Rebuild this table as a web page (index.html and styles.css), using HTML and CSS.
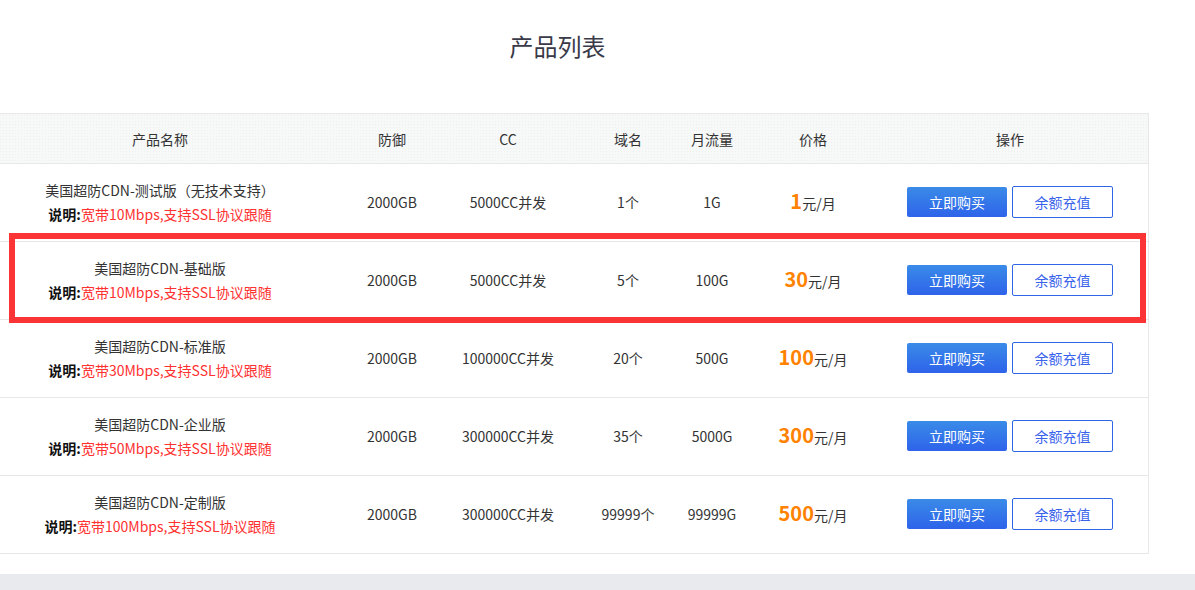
FILE: index.html
```html
<!DOCTYPE html>
<html lang="zh-CN">
<head>
<meta charset="utf-8">
<title>产品列表</title>
<link rel="stylesheet" href="styles.css">
</head>
<body>
<div class="page">
  <div class="wrap">
    <h2 class="title">产品列表</h2>
    <div class="table">
      <div class="row head">
        <div class="cell">产品名称</div>
        <div class="cell">防御</div>
        <div class="cell">CC</div>
        <div class="cell">域名</div>
        <div class="cell">月流量</div>
        <div class="cell">价格</div>
        <div class="cell">操作</div>
      </div>

      <div class="row">
        <div class="cell name">
          <div class="pname">美国超防CDN-测试版（无技术支持）</div>
          <div class="desc"><b>说明:</b><span>宽带10Mbps,支持SSL协议跟随</span></div>
        </div>
        <div class="cell">2000GB</div>
        <div class="cell">5000CC并发</div>
        <div class="cell">1个</div>
        <div class="cell">1G</div>
        <div class="cell price"><strong>1</strong>元/月</div>
        <div class="cell ops"><button class="btn buy">立即购买</button><button class="btn charge">余额充值</button></div>
      </div>

      <div class="row highlight">
        <div class="cell name">
          <div class="pname">美国超防CDN-基础版</div>
          <div class="desc"><b>说明:</b><span>宽带10Mbps,支持SSL协议跟随</span></div>
        </div>
        <div class="cell">2000GB</div>
        <div class="cell">5000CC并发</div>
        <div class="cell">5个</div>
        <div class="cell">100G</div>
        <div class="cell price"><strong>30</strong>元/月</div>
        <div class="cell ops"><button class="btn buy">立即购买</button><button class="btn charge">余额充值</button></div>
      </div>

      <div class="row">
        <div class="cell name">
          <div class="pname">美国超防CDN-标准版</div>
          <div class="desc"><b>说明:</b><span>宽带30Mbps,支持SSL协议跟随</span></div>
        </div>
        <div class="cell">2000GB</div>
        <div class="cell">100000CC并发</div>
        <div class="cell">20个</div>
        <div class="cell">500G</div>
        <div class="cell price"><strong>100</strong>元/月</div>
        <div class="cell ops"><button class="btn buy">立即购买</button><button class="btn charge">余额充值</button></div>
      </div>

      <div class="row">
        <div class="cell name">
          <div class="pname">美国超防CDN-企业版</div>
          <div class="desc"><b>说明:</b><span>宽带50Mbps,支持SSL协议跟随</span></div>
        </div>
        <div class="cell">2000GB</div>
        <div class="cell">300000CC并发</div>
        <div class="cell">35个</div>
        <div class="cell">5000G</div>
        <div class="cell price"><strong>300</strong>元/月</div>
        <div class="cell ops"><button class="btn buy">立即购买</button><button class="btn charge">余额充值</button></div>
      </div>

      <div class="row">
        <div class="cell name">
          <div class="pname">美国超防CDN-定制版</div>
          <div class="desc"><b>说明:</b><span>宽带100Mbps,支持SSL协议跟随</span></div>
        </div>
        <div class="cell">2000GB</div>
        <div class="cell">300000CC并发</div>
        <div class="cell">99999个</div>
        <div class="cell">99999G</div>
        <div class="cell price"><strong>500</strong>元/月</div>
        <div class="cell ops"><button class="btn buy">立即购买</button><button class="btn charge">余额充值</button></div>
      </div>
    </div>
  </div>
  <div class="band"></div>
</div>
</body>
</html>
```

FILE: styles.css
```css
* { box-sizing: border-box; }
html, body { margin: 0; padding: 0; background: #fff; }
body {
  font-family: "Noto Sans CJK SC", "Noto Sans", sans-serif;
  color: #333;
  font-size: 14px;
  overflow: hidden;
}
.page { width: 1195px; height: 590px; overflow: hidden; }
.wrap {
  width: 1183px;
  margin-left: -34px;
}
.title {
  margin: 0;
  padding-top: 28px;
  height: 113px;
  font-size: 24px;
  line-height: 36px;
  font-weight: normal;
  text-align: center;
  color: #3a3a48;
}
.table {
  border-top: 1px solid #e8e8e8;
  border-right: 1px solid #e8e8e8;
}
.row {
  display: grid;
  grid-template-columns: 388px 76px 156px 84px 84px 118px 276px;
  height: 78px;
  border-bottom: 1px solid #e8e8e8;
}
.row.head {
  height: 50px;
  background-color: #f7f8f8;
  background-image: radial-gradient(#eef0f0 0.6px, transparent 0.8px);
  background-size: 3px 3px;
}
.cell {
  display: flex;
  align-items: center;
  justify-content: center;
  white-space: nowrap;
  font-size: 14px;
  line-height: 20px;
  color: #333;
  padding-bottom: 2px;
}
.head .cell { padding-bottom: 0; padding-top: 1px; }
.cell.name {
  flex-direction: column;
  line-height: 24px;
}
.desc b { color: #111; font-weight: bold; }
.desc span { color: #ff3131; }
.price { align-items: baseline; padding-top: 25px; padding-bottom: 0; color: #333; }
.price strong {
  color: #ff8200;
  font-size: 20px;
  font-weight: bold;
  line-height: 24px;
}
.ops { gap: 5px; padding-bottom: 2px; }
.btn {
  font-family: inherit;
  font-size: 14px;
  line-height: 20px;
  border-radius: 2px;
  cursor: pointer;
  padding: 0;
}
.btn.buy {
  width: 100px;
  height: 30px;
  border: none;
  color: #fff;
  background: linear-gradient(#3a8be8, #2e63ea);
}
.btn.charge {
  width: 101px;
  height: 32px;
  border: 1px solid #2f66e6;
  background: #fff;
  color: #3a63ec;
}
.row.highlight { position: relative; }
.row.highlight::after {
  content: "";
  position: absolute;
  left: 43px;
  right: 2px;
  top: -9px;
  bottom: -4px;
  border: 6px solid #fb3535;
  pointer-events: none;
}
.band {
  margin-top: 20px;
  height: 20px;
  background: #e9eaee;
}
```
